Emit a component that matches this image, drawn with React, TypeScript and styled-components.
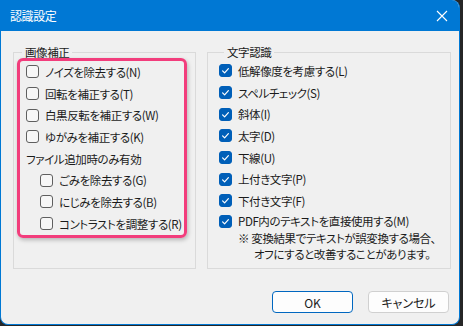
import styled, { createGlobalStyle } from "styled-components";

const GlobalStyle = createGlobalStyle`
  html, body {
    margin: 0;
    padding: 0;
    background: #262626;
  }
  body {
    font-family: "Noto Sans CJK JP", "Noto Sans", sans-serif;
    font-size: 11.5px;
    letter-spacing: -0.4px;
    font-feature-settings: "palt";
    color: #1b1b1b;
  }
`;

const LEFT_ITEMS = ["ノイズを除去する(N)", "回転を補正する(T)", "白黒反転を補正する(W)", "ゆがみを補正する(K)"];
const LEFT_SUB_ITEMS = ["ごみを除去する(G)", "にじみを除去する(B)", "コントラストを調整する(R)"];
const RIGHT_ITEMS = [
  "低解像度を考慮する(L)",
  "スペルチェック(S)",
  "斜体(I)",
  "太字(D)",
  "下線(U)",
  "上付き文字(P)",
  "下付き文字(F)",
];

const CheckBox = ({ checked }: { checked?: boolean }) => (
  <Box $checked={checked}>
    {checked && (
      <svg width="13" height="13" viewBox="0 0 13 13">
        <polyline points="3.6,6.8 5.6,8.8 9.4,4.6" fill="none" stroke="#fff" strokeWidth="1.2" strokeLinecap="round" strokeLinejoin="round" />
      </svg>
    )}
  </Box>
);

const App = () => {
  return (
    <>
      <GlobalStyle />
      <Window>
        <TitleBar>
          <Title>認識設定</Title>
          <CloseIcon width="12" height="12" viewBox="0 0 12 12">
            <path d="M1 1 L11 11 M11 1 L1 11" stroke="#fff" strokeWidth="1.1" />
          </CloseIcon>
        </TitleBar>
        <Body>
          <Groups>
            <LeftGroup>
              <Legend>画像補正</Legend>
              <Highlight>
                {LEFT_ITEMS.map((label) => (
                  <Row key={label}>
                    <CheckBox />
                    {label}
                  </Row>
                ))}
                <Row>ファイル追加時のみ有効</Row>
                {LEFT_SUB_ITEMS.map((label) => (
                  <Row key={label} $indent={14}>
                    <CheckBox />
                    {label}
                  </Row>
                ))}
              </Highlight>
            </LeftGroup>
            <RightGroup>
              <Legend>文字認識</Legend>
              {RIGHT_ITEMS.map((label) => (
                <Row key={label}>
                  <CheckBox checked />
                  {label}
                </Row>
              ))}
              <TallRow>
                <CheckBox checked />
                <LabelBlock>
                  PDF内のテキストを直接使用する(M)
                  <Note>
                    ※ 変換結果でテキストが誤変換する場合、
                    <br />
                    オフにすると改善することがあります。
                  </Note>
                </LabelBlock>
              </TallRow>
            </RightGroup>
          </Groups>
          <Buttons>
            <Button $primary>OK</Button>
            <Button>キャンセル</Button>
          </Buttons>
        </Body>
      </Window>
    </>
  );
};

const Window = styled.div`
  display: flex;
  flex-direction: column;
  width: 460px;
  height: 325px;
  box-sizing: border-box;
  border: 1px solid #0078d4;
  border-top: none;
  border-radius: 0 8px 8px 8px;
  overflow: hidden;
  background: #f0f0f0;
`;

const TitleBar = styled.div`
  display: flex;
  align-items: center;
  justify-content: space-between;
  height: 31px;
  margin: 0 -1px;
  padding: 0 12px 0 10px;
  background: #0078d4;
  color: #fff;
`;

const Title = styled.span`
  font-size: 12px;
  line-height: 1;
`;

const CloseIcon = styled.svg`
  display: block;
`;

const Body = styled.div`
  display: flex;
  flex-direction: column;
  flex: 1;
  padding: 13px 8px 11px 12px;
`;

const Groups = styled.div`
  display: flex;
  gap: 11px;
  height: 225px;
`;

const GroupBase = styled.fieldset`
  margin: 0;
  padding: 0 0 0 3px;
  border: 1px solid #dadada;
  box-sizing: border-box;
  min-width: 0;
`;

const LeftGroup = styled(GroupBase)`
  width: 183px;
`;

const RightGroup = styled(GroupBase)`
  flex: 1;
  padding-left: 11px;
`;

const Legend = styled.legend`
  margin-left: 5px;
  padding: 0 3px;
  line-height: 16px;
`;

const Highlight = styled.div`
  width: 170px;
  box-sizing: border-box;
  margin-top: -2px;
  padding: 0 0 0 6px;
  border: 3px solid #f23d7c;
  border-radius: 6px;
  box-shadow: 1px 2px 4px rgba(0, 0, 0, 0.25);
`;

const Row = styled.div<{ $indent?: number }>`
  display: flex;
  align-items: center;
  gap: 6px;
  height: 21.7px;
  padding-left: ${(p) => p.$indent ?? 0}px;
  white-space: nowrap;
`;

const TallRow = styled.div`
  display: flex;
  align-items: flex-start;
  gap: 6px;
  padding-top: 3px;
`;

const LabelBlock = styled.div`
  line-height: 16.5px;
  margin-top: -1.8px;
  white-space: nowrap;
`;

const Note = styled.div`
  padding-left: 16px;
  text-indent: -16px;
`;

const Box = styled.span<{ $checked?: boolean }>`
  flex: none;
  display: inline-block;
  width: 13px;
  height: 13px;
  box-sizing: border-box;
  border-radius: 3px;
  border: 1px solid ${(p) => (p.$checked ? "#005fb8" : "#5f5f5f")};
  background: ${(p) => (p.$checked ? "#005fb8" : "#f7f7f7")};
  svg {
    display: block;
    margin: -1px;
  }
`;

const Buttons = styled.div`
  display: flex;
  justify-content: flex-end;
  gap: 15px;
  margin-top: auto;
  padding-right: 2px;
`;

const Button = styled.button<{ $primary?: boolean }>`
  width: 81px;
  height: 22px;
  padding: 0;
  font-family: inherit;
  font-size: 12px;
  font-feature-settings: "palt";
  color: #1b1b1b;
  background: #fdfdfd;
  border: 1px solid ${(p) => (p.$primary ? "#0067c0" : "#d0d0d0")};
  border-radius: 4px;
`;

export default App;
